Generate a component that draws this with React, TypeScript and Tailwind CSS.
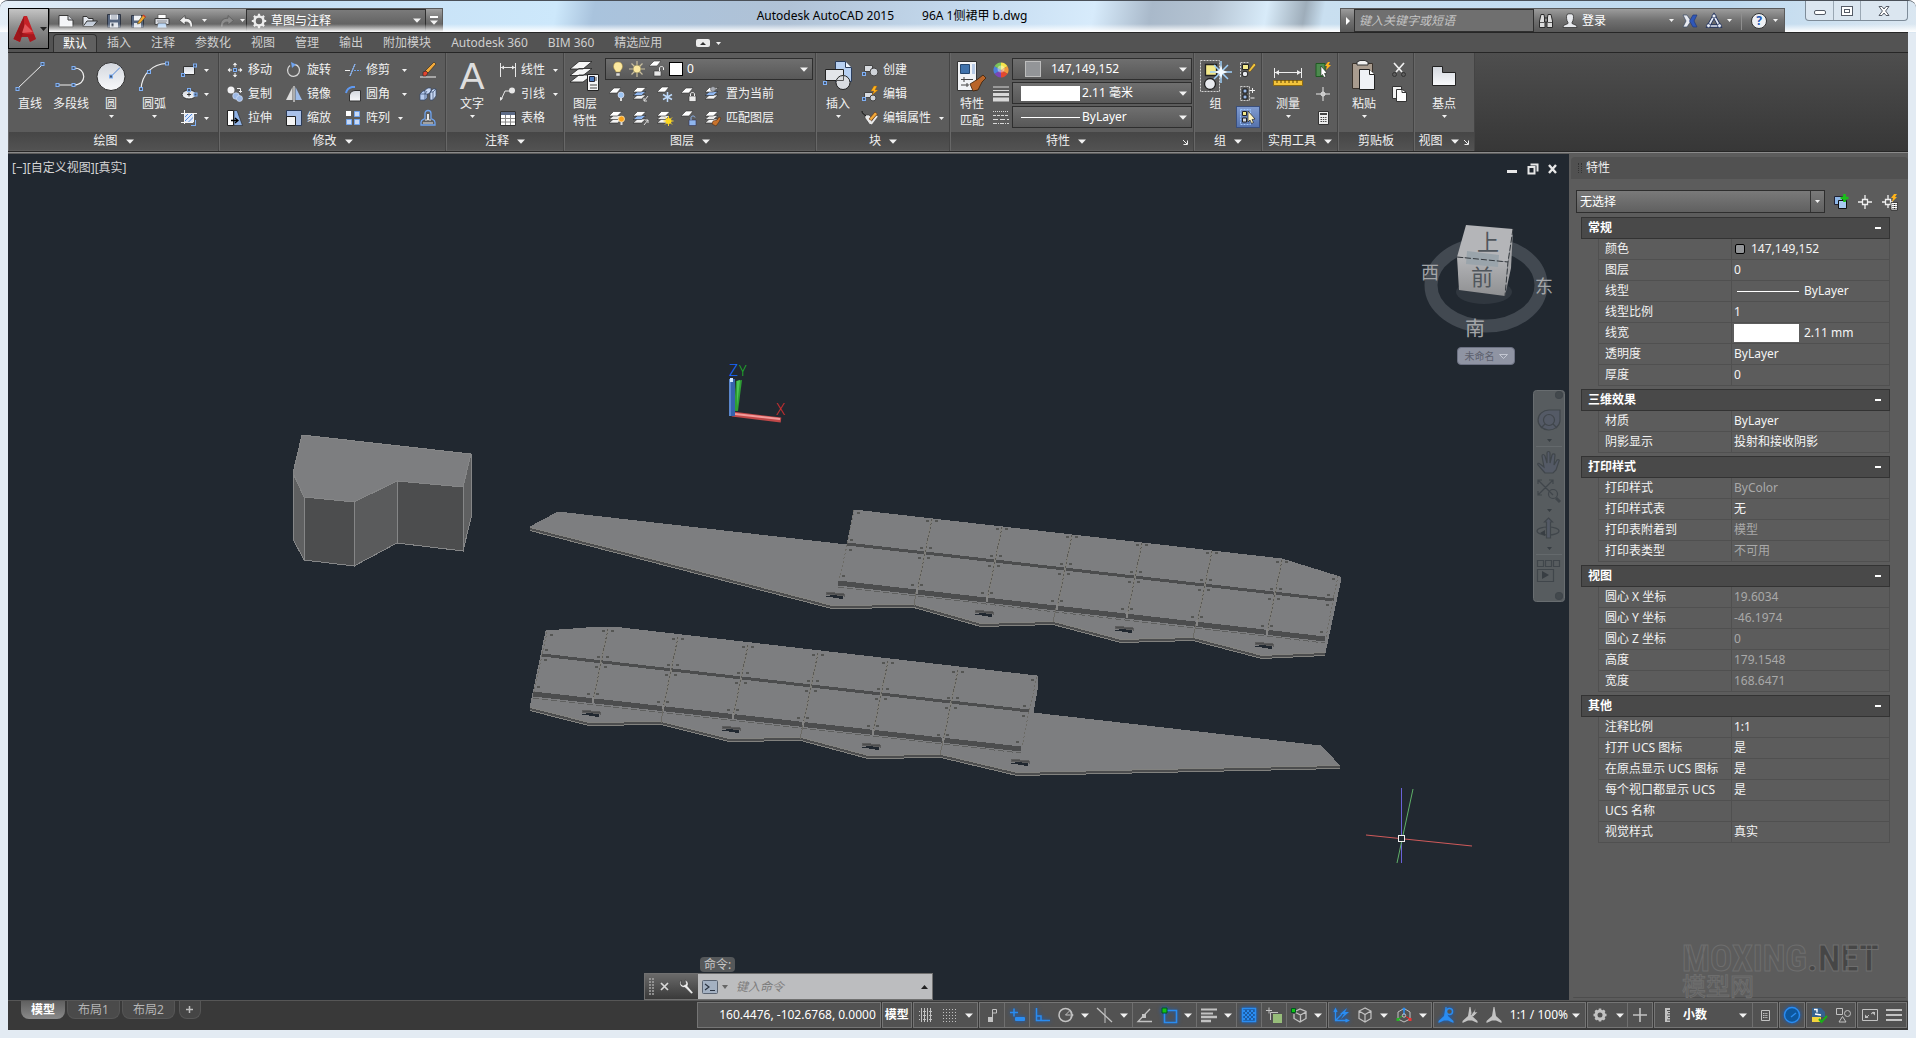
import type { ReactNode } from 'react'
import clsx from 'clsx'

/* ---------- small shared pieces ---------- */

type IconProps = { size?: number; className?: string; children: ReactNode }

function Icon({ size = 16, className, children }: IconProps) {
  return (
    <svg width={size} height={size} viewBox={`0 0 ${size} ${size}`} fill="none" className={clsx('shrink-0 overflow-visible', className)} aria-hidden="true">
      {children}
    </svg>
  )
}

function Caret({ big = false, className }: { big?: boolean; className?: string }) {
  return big ? (
    <svg width="8" height="5" viewBox="0 0 8 5" className={clsx('shrink-0', className)} aria-hidden="true">
      <path d="M0 0.5h8L4 4.8z" fill="#f2f2f2" />
    </svg>
  ) : (
    <svg width="5" height="3" viewBox="0 0 5 3" className={clsx('shrink-0', className)} aria-hidden="true">
      <path d="M0 0h5L2.5 3z" fill="#f2f2f2" />
    </svg>
  )
}

function Node({ x, y }: { x: number; y: number }) {
  return <rect x={x - 1.5} y={y - 1.5} width="3" height="3" fill="#46566e" stroke="#7fb0f5" />
}

function Sheets({ mid = '#e9e9e9' }: { mid?: string }) {
  return (
    <g stroke="#2c2c2c" strokeWidth=".6">
      <path d="M0 13 4.500 9h8.500l-4.500 4z" fill="#f4f4f4" />
      <path d="M0 9.500 4.500 5.500h8.500l-4.500 4z" fill={mid} />
      <path d="M0 6 4.500 1.500h8.500l-4.500 4.500z" fill="#fff" />
    </g>
  )
}

/* ---------- title bar ---------- */

function QuickAccess() {
  return (
    <div className="ml-[49px] mt-[7px] flex h-6 items-center border border-b-0 border-[#5a5a5a] bg-linear-to-b from-[#a0a0a0] via-[#6f6f6f] to-[#555555]">
      <div className="flex items-center gap-2 pl-2">
        <button aria-label="新建">
          <Icon>
            <path d="M1 2.500h9l5 4.500v7H1z" fill="#f4f5f8" stroke="#3a3a3a" />
            <path d="M10 2.500V7h5" fill="#c9ccd3" stroke="#3a3a3a" />
          </Icon>
        </button>
        <button aria-label="打开">
          <Icon>
            <path d="M1 13.500v-10h4l1.500 2H11v3" fill="#e4e8ef" stroke="#333" />
            <path d="M1 13.500 5 8h10.500L11 13.500z" fill="#c3ccd9" stroke="#333" />
          </Icon>
        </button>
        <button aria-label="保存">
          <Icon>
            <path d="M1.500 1.500h13v13h-13z" fill="#56657e" stroke="#2e3542" />
            <path d="M4 1.500h8v5H4z" fill="#f0f2f5" />
            <path d="M4 9.500h8v5H4z" fill="#dfe3ea" />
            <path d="M5.500 10.500h2v3h-2z" fill="#333d4d" />
            <path d="M5 3h6M5 5h6" stroke="#9099a8" />
          </Icon>
        </button>
        <button aria-label="另存为">
          <Icon>
            <path d="M1.500 2.500h12v12h-12z" fill="#56657e" stroke="#2e3542" />
            <path d="M4 2.500h7v5H4z" fill="#f0f2f5" />
            <path d="M4 10h7v4.500H4z" fill="#dfe3ea" />
            <path d="m8 9 5-7 2.500 2-5 6-3 1z" fill="#f0a32c" stroke="#553" strokeWidth=".7" />
            <path d="m13 2 2.500 2" stroke="#d23b2b" strokeWidth="1.500" />
          </Icon>
        </button>
        <button aria-label="打印">
          <Icon>
            <path d="M4 1.500h8v4H4z" fill="#fff" stroke="#555" strokeWidth=".7" />
            <path d="M1 5.500h14v6H1z" fill="#d9dce2" stroke="#3d3d3d" />
            <path d="M4 10h8l1 5H3z" fill="#b8d5f5" stroke="#555" strokeWidth=".7" />
            <path d="M3 8h10" stroke="#8a8f98" />
          </Icon>
        </button>
        <button aria-label="放弃">
          <Icon>
            <path d="M7 2.500 1.500 7.500 7 12V9.200c3.500-.4 5 1 5 4.800h2.500c.3-6-2-8.800-7.500-8.800z" fill="#f0f0f0" stroke="#444" strokeWidth=".8" />
          </Icon>
        </button>
      </div>
      <Caret className="ml-2" />
      <button aria-label="重做" className="ml-3">
        <Icon>
          <path d="M9 2.500 14.500 7.500 9 12V9.200c-3.500-.4-5 1-5 4.800H1.500C1.200 8 3.500 5.200 9 5.200z" fill="#8b8b8b" stroke="#5c5c5c" strokeWidth=".8" />
        </Icon>
      </button>
      <Caret className="ml-[5px]" />
      <label className="ml-px flex h-full w-[180px] items-center border border-[#2f2f2f] bg-linear-to-b from-[#7a7a7a] to-[#585858] pl-1 pr-1">
        <Icon>
          <circle cx="8" cy="8" r="4.500" stroke="#ececec" strokeWidth="2.600" />
          <g stroke="#ececec" strokeWidth="2.200">
            <path d="M8 .8v2.400M8 12.800v2.400M.8 8h2.400M12.800 8h2.400M2.900 2.900l1.700 1.700M11.400 11.400l1.700 1.700M13.100 2.900l-1.700 1.700M4.600 11.400l-1.700 1.700" />
          </g>
        </Icon>
        <select aria-label="工作空间" className="ml-1 flex-1 appearance-none bg-transparent text-xs text-white">
          <option>草图与注释</option>
        </select>
        <Caret big />
      </label>
      <button aria-label="自定义快速访问工具栏" className="flex h-full w-4 flex-col items-center justify-center gap-[2px]">
        <span className="h-[2px] w-2 bg-white" />
        <Caret big />
      </button>
    </div>
  )
}

function InfoCenter() {
  return (
    <div className="mr-5 mt-[7px] flex h-6 w-[445px] items-center border border-b-0 border-[#5a5a5a] bg-linear-to-b from-[#9c9c9c] via-[#707070] to-[#585858]">
      <button aria-label="收起" className="flex w-[13px] justify-center">
        <svg width="4" height="8" viewBox="0 0 4 8" aria-hidden="true"><path d="M0 0l4 4-4 4z" fill="#fff" /></svg>
      </button>
      <input
        aria-label="搜索"
        placeholder="键入关键字或短语"
        className="h-full w-[180px] border border-[#2f2f2f] bg-[#6f6f6f] px-1 text-xs italic text-white placeholder:text-[#c4c4c4]"
      />
      <button aria-label="搜索" className="ml-1">
        <Icon>
          <path d="M3 1.500h3l1 6v7H1.500V8zM10 1.500h3L14.500 8v6.500H9v-7z" fill="#dcdcdc" stroke="#2c2c2c" />
          <path d="M6.500 5h3v4h-3z" fill="#8a8a8a" stroke="#2c2c2c" />
          <path d="M2 9.500h4.500M9.500 9.500H14" stroke="#555" />
        </Icon>
      </button>
      <button className="ml-2 flex items-center gap-1 text-xs text-white">
        <Icon>
          <path d="M5 1.500c1-1 5-1 6 0 1 2 .5 6-1 8v1l4.500 2 .5 2H1l.5-2 4.500-2v-1c-1.500-2-2-6-1-8z" fill="#e8eaee" stroke="#333" strokeWidth=".8" />
        </Icon>
        登录
      </button>
      <Caret className="ml-auto" />
      <button aria-label="Exchange" className="ml-2">
        <Icon>
          <path d="M1 2h4l4 6-4 6H1l3-6z" fill="#e8eaf0" stroke="#3b4a66" strokeWidth=".7" />
          <path d="M15 2h-4L7.500 8l3.500 6h4l-3-6z" fill="#2f57b8" stroke="#233a78" strokeWidth=".7" />
        </Icon>
      </button>
      <button aria-label="A360" className="ml-2">
        <Icon>
          <path d="M8 3 2.500 13h11z" stroke="#22325c" strokeWidth="3.500" />
          <path d="M8 3 2.500 13h11z" stroke="#e6ebf5" strokeWidth="1.700" />
          <circle cx="8" cy="3" r="2" fill="#e6ebf5" stroke="#22325c" strokeWidth=".8" />
          <circle cx="2.500" cy="12.700" r="2" fill="#e6ebf5" stroke="#22325c" strokeWidth=".8" />
          <circle cx="13.500" cy="12.700" r="2" fill="#e6ebf5" stroke="#22325c" strokeWidth=".8" />
        </Icon>
      </button>
      <Caret className="ml-[5px]" />
      <span className="mx-[9px] h-[18px] w-px bg-[#8e8e8e]" />
      <button aria-label="帮助" className="flex size-4 items-center justify-center rounded-full border border-[#333] bg-[#eef0f4] text-xs font-bold text-[#2158b5]">
        ?
      </button>
      <Caret className="mx-[6px]" />
    </div>
  )
}

function TitleBar() {
  return (
    <header className="relative flex h-[31px] shrink-0 items-start">
      <div className="absolute inset-x-0 bottom-0 h-2 bg-linear-to-b from-transparent to-white" />
      <QuickAccess />
      <h1 className="absolute left-1/2 top-[7px] flex -translate-x-1/2 gap-7 whitespace-pre pr-33 text-xs leading-4 text-black">
        <span>Autodesk AutoCAD 2015</span>
        <span>96A 1侧裙甲 b.dwg</span>
      </h1>
      <div className="relative ml-auto flex">
        <InfoCenter />
        <div className="mr-2 flex h-5 overflow-hidden rounded-b border border-t-0 border-[#7e8c99] bg-[#dbe6f0]">
          <button aria-label="最小化" className="flex w-7 items-center justify-center border-r border-[#9aa7b3]">
            <span className="mt-1 h-[5px] w-3 rounded-xs border border-[#555b66] bg-white" />
          </button>
          <button aria-label="还原" className="flex w-[27px] items-center justify-center border-r border-[#9aa7b3]">
            <span className="flex h-[10px] w-3 items-center justify-center border border-[#555b66] bg-white">
              <span className="h-1 w-[6px] border border-[#555b66]" />
            </span>
          </button>
          <button aria-label="关闭" className="flex w-[46px] items-center justify-center">
            <svg width="12" height="10" viewBox="0 0 12 10" aria-hidden="true">
              <path d="M1 .5h3l2 2.500 2-2.500h3L7.600 5 11 9.500H8L6 7 4 9.500H1L4.400 5z" fill="#fff" stroke="#555b66" />
            </svg>
          </button>
        </div>
      </div>
    </header>
  )
}

/* ---------- ribbon ---------- */

const TABS = ['默认', '插入', '注释', '参数化', '视图', '管理', '输出', '附加模块', 'Autodesk 360', 'BIM 360', '精选应用']

function TabRow() {
  return (
    <nav className="flex h-[21px] shrink-0 items-end border-y border-[#262626] bg-[#535353] pl-[45px]">
      {TABS.map((tab, i) => (
        <button
          key={tab}
          className={clsx(
            'h-[18px] text-xs leading-[18px]',
            i === 0 ? 'rounded-t-sm border border-b-0 border-[#303030] bg-[#606060] px-[9px]' : 'px-[10px] text-[#cfcfcf]',
            i === 0 && 'text-white',
          )}
        >
          {tab}
        </button>
      ))}
      <button aria-label="最小化功能区" className="ml-6 flex h-[18px] items-center gap-[6px]">
        <span className="flex h-2 w-[14px] items-center justify-center rounded-xs bg-[#ececec]">
          <svg width="6" height="3" viewBox="0 0 6 3" aria-hidden="true"><path d="M0 3h6L3 0z" fill="#333" /></svg>
        </span>
        <Caret />
      </button>
    </nav>
  )
}

type PanelProps = { title: string; width: string; arrow?: boolean; launcher?: boolean; children: ReactNode }

function Panel({ title, width, arrow = true, launcher, children }: PanelProps) {
  return (
    <section className={clsx('flex h-full shrink-0 flex-col border-r border-[#444444] border-l border-l-[#676767] bg-[#5c5c5c]', width)}>
      <div className="flex flex-1 items-start pt-[5px]">{children}</div>
      <div className={clsx('relative mb-px flex h-[18px] items-center justify-center gap-2 bg-linear-to-b from-[#464646] to-[#525252] text-xs text-[#f0f0f0]', launcher && 'pr-3')}>
        {title}
        {arrow && <Caret big />}
        {launcher && (
          <svg width="7" height="7" viewBox="0 0 7 7" className="absolute right-1 top-[7px]" aria-hidden="true">
            <path d="M1 1l4 4M5.500 1.500v4h-4" stroke="#eee" fill="none" />
          </svg>
        )}
      </div>
    </section>
  )
}

type BigProps = { label: string; second?: string; arrow?: boolean; width?: string; children: ReactNode }

function Big({ label, second, arrow, width = 'w-10', children }: BigProps) {
  return (
    <button className={clsx('flex shrink-0 flex-col items-center text-xs leading-[17px] text-[#f2f2f2]', width)}>
      <Icon size={32} className="mt-[2px]">{children}</Icon>
      <span className="mt-[3px] whitespace-nowrap">{label}</span>
      {second && <span>{second}</span>}
      {arrow && <Caret className="mt-[3px]" />}
    </button>
  )
}

function Small({ label, arrow, gap, name, active, children }: { label?: string; arrow?: boolean; gap?: string; name?: string; active?: boolean; children: ReactNode }) {
  return (
    <button
      aria-label={label ? undefined : name}
      className={clsx(
        'flex items-center text-xs whitespace-nowrap text-[#f2f2f2]',
        active ? 'h-[22px] w-6 justify-center border border-[#3a4f7c] bg-linear-to-b from-[#7f9bd0] to-[#5673ad]' : 'h-6',
      )}
    >
      <Icon>{children}</Icon>
      {label && <span className="ml-[5px]">{label}</span>}
      {arrow && <Caret className={gap ?? 'ml-[10px]'} />}
    </button>
  )
}

function Column({ className, children }: { className?: string; children: ReactNode }) {
  return <div className={clsx('flex shrink-0 flex-col', className)}>{children}</div>
}

function DrawPanel() {
  return (
    <Panel title="绘图" width="w-[211px]">
      <Big label="直线" width="w-[42px]">
        <path d="M3 29 29 4" stroke="#f0f0f0" />
        <Node x={3.500} y={29} /><Node x={28.500} y={4} />
      </Big>
      <Big label="多段线" width="w-10">
        <path d="M2 25h17c13 0 13-17 0-17" stroke="#f0f0f0" strokeWidth="1.200" />
        <Node x={2.500} y={25} /><Node x={18.500} y={25} /><Node x={18.500} y={8} />
      </Big>
      <Big label="圆" arrow>
        <circle cx="16" cy="16.500" r="14" fill="url(#disc)" stroke="#2f2f2f" />
        <path d="m16 16.500 9-9" stroke="#4f86d8" />
        <Node x={16} y={16.500} />
      </Big>
      <Big label="圆弧" arrow width="w-[46px]">
        <path d="M3 29C4 14 14 4 29 3.500" stroke="#f0f0f0" strokeWidth="1.200" />
        <Node x={3} y={29} /><Node x={11} y={12} /><Node x={29} y={3.500} />
      </Big>
      <Column className="ml-1">
        <Small name="矩形" arrow gap="ml-[7px]">
          <path d="M2.500 4.500h11v8h-11z" fill="url(#disc)" stroke="#333" /><Node x={14} y={3.500} /><Node x={2} y={13} />
        </Small>
        <Small name="椭圆" arrow gap="ml-[7px]">
          <ellipse cx="8" cy="8.500" rx="7" ry="4.500" fill="url(#disc)" stroke="#333" />
          <path d="M6 8.500h4M8 6.500v4" stroke="#333" /><Node x={8} y={4} /><Node x={14.500} y={8.500} />
        </Small>
        <Small name="图案填充" arrow gap="ml-[7px]">
          <path d="M3.500 3.500h9v9h-9z" fill="#dfe8f8" />
          <path d="M3 8l5-5M3 12l9-9M7 12.500l6-6M11 13l2-2" stroke="#4f86d8" />
          <path d="M3.500 0v14M12.500 3v9M0 3.500h16M0 12.500h12" stroke="#f4f4f4" />
          <path d="M10 15.500h5M14.500 10v5" stroke="#7fb0f5" />
        </Small>
      </Column>
    </Panel>
  )
}

function ModifyPanel() {
  return (
    <Panel title="修改" width="w-[227px]">
      <Column className="ml-[7px] w-[59px]">
        <Small label="移动">
          <path d="M8 0l3 3.500H5zM8 16l3-3.500H5zM0 8l3.500-3v6zM16 8l-3.500-3v6z" fill="#f0f0f0" stroke="#333" strokeWidth=".5" />
          <path d="M8 3v2M8 11v2M3 8h2M11 8h2" stroke="#f0f0f0" /><Node x={8} y={8} />
        </Small>
        <Small label="复制">
          <circle cx="4" cy="4" r="3.500" fill="#f2f2f4" /><circle cx="9" cy="10" r="3.300" fill="#9db9e6" stroke="#dce6f7" strokeWidth=".6" />
          <circle cx="12.500" cy="12.500" r="3" fill="#9db9e6" stroke="#dce6f7" strokeWidth=".6" />
          <path d="M10 2.500h3.500V6M12 5l1.500 1.500L15 5" stroke="#f0f0f0" />
        </Small>
        <Small label="拉伸">
          <path d="M.5.500h6v15h-6z" fill="#fff" stroke="#222" /><path d="M7 .5h3l5.500 15H7z" fill="#8fb2e6" stroke="#222" strokeWidth=".6" />
          <path d="M4 10.500h6M8 8l3 2.500L8 13" stroke="#000" strokeWidth="1.300" />
        </Small>
      </Column>
      <Column className="w-[59px]">
        <Small label="旋转">
          <path d="M9 2.500a6 6 0 1 1-5 1" stroke="#d5d5d5" strokeWidth="1.300" /><path d="m5 0 5 2.500L6 6z" fill="#6fa4f0" />
        </Small>
        <Small label="镜像">
          <path d="M6.500 1v13H0z" fill="#dcdcdc" /><path d="M9.500 1v13H16z" fill="#9dbbe8" /><path d="M8 0v16" stroke="#fff" />
        </Small>
        <Small label="缩放">
          <path d="M.5.500h15v15H.5z" fill="#a9c0e8" stroke="#2b3a55" /><path d="M.5 6.500h9v9h-9z" fill="#f4f4f4" stroke="#222" />
        </Small>
      </Column>
      <Column className="w-[75px]">
        <Small label="修剪" arrow gap="ml-3">
          <path d="M0 8.500h5M5 14l5-12" stroke="#f0f0f0" /><path d="M5 14l5-12" stroke="#6fa4f0" /><path d="M9 8.500h7" stroke="#6fa4f0" strokeDasharray="2 1" />
        </Small>
        <Small label="圆角" arrow gap="ml-3">
          <path d="M4.500 15V9A6 6 0 0 1 10 4.500h5.500V15z" fill="url(#disc)" stroke="#333" />
          <path d="M1 7a8 8 0 0 1 6-6h3" stroke="#5f98ef" strokeWidth="2" />
        </Small>
        <Small label="阵列" arrow gap="ml-2">
          <path d="M1 1h5v5H1z" fill="#fff" /><g fill="#c9daf5" stroke="#6fa4f0"><path d="M9.500 1.500h5v5h-5zM1.500 9.500h5v5h-5zM9.500 9.500h5v5h-5z" /></g>
        </Small>
      </Column>
      <Column>
        <Small name="删除">
          <path d="M0 15h16" stroke="#f0f0f0" /><path d="m5 9 9-9 2 2-8 9z" fill="#f2a93a" stroke="#222" strokeWidth=".6" /><path d="M3 10l3-1 2 2-2 3H3z" fill="#e3452f" stroke="#222" strokeWidth=".6" />
        </Small>
        <Small name="分解">
          <path d="M0 8l3-3h4v7l-2 2H0z" fill="#b6cbee" stroke="#33486b" strokeWidth=".7" />
          <path d="M5 4l3-2h3v4l-3 2H5zM10 6l3-3h3v7l-3 4h-3z" fill="#c8d8f3" stroke="#33486b" strokeWidth=".7" />
          <path d="M0 8h5v6M5 8l2-3M10 6h3v8M13 6l3-3" stroke="#33486b" strokeWidth=".7" />
        </Small>
        <Small name="偏移">
          <path d="M1 12.500C1 9 4 10 5 8.500V3.500c0-4 6-4 6 0v5c1 1.500 4 .5 4 4v2.500H1z" stroke="#6fa4f0" strokeWidth="1.300" />
          <path d="M3 13h10M7.500 4v6H5M8.500 4v6H11" stroke="#e8e8e8" />
        </Small>
      </Column>
    </Panel>
  )
}

function AnnotatePanel() {
  return (
    <Panel title="注释" width="w-[118px]">
      <Big label="文字" arrow width="w-[50px]">
        <text x="16" y="29" textAnchor="middle" fontSize="37" fill="#dedede" className="[font-family:'Liberation_Sans',sans-serif]">A</text>
      </Big>
      <Column className="ml-[3px]">
        <Small label="线性" arrow gap="ml-2">
          <path d="M.5 1v14M15.500 1v14M1 5.500h14" stroke="#e8e8e8" /><path d="M1 5.500 4 3.500v4zM15 5.500l-3-2v4z" fill="#e8e8e8" />
        </Small>
        <Small label="引线" arrow gap="ml-2">
          <path d="M1 14 5 5h5" stroke="#e8e8e8" /><circle cx="12" cy="4.500" r="3" fill="#e8e8e8" /><path d="M0 15v-4l3 1z" fill="#e8e8e8" />
        </Small>
        <Small label="表格">
          <path d="M.5 1.500h15v14H.5z" fill="#fff" stroke="#333" /><path d="M1 2h14v3H1z" fill="#5d6b86" />
          <path d="M1 8.500h14M1 12h14M5.500 5v10M10.500 5v10" stroke="#888" />
        </Small>
      </Column>
    </Panel>
  )
}

function LayerPanel() {
  return (
    <Panel title="图层" width="w-[252px]">
      <Big label="图层" second="特性" width="w-10">
        <g stroke="#222" strokeWidth=".8" fill="#f6f6f6">
          <path d="M1 22 10 15h13l-9 7zM1 15.500 10 8.500h13l-9 7zM1 9 10 1.500h13L14 9z" />
        </g>
        <path d="M18.500 14.500h11v16h-11z" fill="#f4f4f4" stroke="#222" />
        <path d="M20.500 16.500h5v5h-5z" fill="#4f7fc4" stroke="#223" /><path d="M27 17v4M21 25h7M21 28h7" stroke="#444" />
      </Big>
      <Column>
        <div className="mr-[2px] flex h-[22px] w-[208px] items-center border border-[#2e2e2e] bg-linear-to-b from-[#6f6f6f] to-[#585858] px-1">
          <Icon><path d="M8 1c3 0 4.500 2 4.500 4.500S10.500 9 10 11H6c-.5-2-2.500-3-2.500-5.500S5 1 8 1z" fill="#fce9a0" stroke="#a98b3c" strokeWidth=".5" /><path d="M6 12h4v3H6z" fill="#ddd" stroke="#555" strokeWidth=".5" /></Icon>
          <Icon className="ml-[3px]"><path d="M8 0v16M0 8h16M2.500 2.500l11 11M13.500 2.500l-11 11" stroke="#c9bfa0" strokeWidth="1.200" /><circle cx="8" cy="8" r="4" fill="#fce9a0" stroke="#8f8660" strokeWidth=".8" /></Icon>
          <Icon className="ml-1"><path d="M0 5l5-5h7L8 5z" fill="#fff" stroke="#333" strokeWidth=".6" /><path d="M5 10h7v5H5z" fill="#e9e9e9" stroke="#333" strokeWidth=".6" /><path d="M10.500 10V7c0-2 4-2 4 0v2" stroke="#eee" /></Icon>
          <span className="ml-1 size-[14px] border border-black bg-white" />
          <select aria-label="图层" className="ml-1 flex-1 appearance-none bg-transparent text-xs text-white">
            <option>0</option>
          </select>
          <Caret big />
        </div>
        <div className="mt-[2px] flex items-center gap-2 pl-1">
          <Small name="关"><path d="M0 7l5-5h7L8 7z" fill="#fff" stroke="#333" strokeWidth=".6" /><circle cx="12" cy="9" r="3" fill="#9cc4f2" stroke="#eef" strokeWidth=".6" /><path d="M11 12h2v3h-2z" fill="#ddd" /></Small>
          <Small name="隔离"><Sheets mid="#8fb6ee" /><path d="M15 10l-4 5M11 12v3h3" stroke="#ddd" /></Small>
          <Small name="冻结"><path d="M0 6l5-5h7L8 6z" fill="#fff" stroke="#333" strokeWidth=".6" /><path d="M10.500 6v10M6 8.500l9 5M15 8.500l-9 5" stroke="#bcd8fa" strokeWidth="1.500" /></Small>
          <Small name="锁定"><path d="M0 7l5-5h7L8 7z" fill="#fff" stroke="#333" strokeWidth=".6" /><path d="M8 10h7v5.500H8z" fill="#e9e9e9" stroke="#333" strokeWidth=".6" /><path d="M9.500 10V8c0-2 4-2 4 0v2" stroke="#eee" /></Small>
          <Small label="置为当前"><Sheets mid="#8fb6ee" /><circle cx="8" cy="3" r="2.500" fill="#a7abb3" stroke="#444" strokeWidth=".5" /></Small>
        </div>
        <div className="flex items-center gap-2 pl-1">
          <Small name="打开所有图层"><Sheets /><circle cx="12.500" cy="9" r="3" fill="#f9a21b" stroke="#fde6b4" strokeWidth=".8" /><path d="M11.500 12h2v3h-2z" fill="#ddd" /></Small>
          <Small name="取消隔离"><Sheets mid="#8fb6ee" /><path d="M11 15l4-5M12 10h3v3" stroke="#ddd" /></Small>
          <Small name="解冻所有图层"><Sheets /><path d="M11.500 6v10M6.500 11h10M8 7.500l7 7M15 7.500l-7 7" stroke="#f6d22c" /><circle cx="11.500" cy="11" r="3" fill="#ffd91e" /></Small>
          <Small name="解锁"><path d="M0 6l5-5h7L8 6z" fill="#fff" stroke="#333" strokeWidth=".6" /><path d="M8 10h7v5.500H8z" fill="#8fb6ee" stroke="#335" strokeWidth=".6" /><path d="M10 10V7.500c0-2 4-2 4 0" stroke="#8fb6ee" /></Small>
          <Small label="匹配图层"><Sheets /><path d="M8 11l4-1 2-3 2 1-2 4-3 4-4-2z" fill="#c8732c" stroke="#40230c" strokeWidth=".5" /></Small>
        </div>
      </Column>
    </Panel>
  )
}

function BlockPanel() {
  return (
    <Panel title="块" width="w-[134px]">
      <Big label="插入" arrow width="w-[42px]">
        <path d="M13.500 1.500h10l6 6v14h-16z" fill="#b7d0f2" stroke="#2c3e5c" /><path d="M23.500 1.500v6h6" fill="#eef4fc" stroke="#2c3e5c" />
        <path d="M3.500 9.500h18v11h-18z" fill="#e3e5e9" stroke="#222" /><circle cx="21" cy="22.500" r="7" fill="#d9dce1" stroke="#222" />
        <path d="M14 20.500h7.500V15.500" stroke="#555" /><Node x={3} y={23} />
      </Big>
      <Column className="ml-[3px]">
        <Small label="创建"><path d="M2.500 3.500h8v6h-8z" fill="#d8dbe0" stroke="#444" /><circle cx="12" cy="10" r="4" fill="#cfd3d9" stroke="#444" /><Node x={2} y={12} /></Small>
        <Small label="编辑"><path d="M2.500 6.500h8v5h-8z" fill="#d8dbe0" stroke="#444" /><circle cx="11" cy="12" r="3" fill="#cfd3d9" stroke="#444" /><path d="M12 0l-3 5h3l-2 4 6-5h-3l2-4z" fill="#ffb31a" stroke="#a65b00" strokeWidth=".4" /><Node x={2} y={13} /></Small>
        <Small label="编辑属性" arrow gap="ml-2"><path d="M3 5h4l3 3v5L8 15 3 8z" fill="#e9e9e9" stroke="#333" strokeWidth=".6" /><path d="M9 14l6-8" stroke="#e9e9e9" strokeWidth="2" /><path d="m7 9 6-7 2.500 2-6 6.500z" fill="#f2a93a" stroke="#5b2b12" strokeWidth=".6" /><path d="M0 1c0 3 2 3 4 5" stroke="#111" /></Small>
      </Column>
    </Panel>
  )
}

function PropertySelect({ label, children, className }: { label: string; children: ReactNode; className?: string }) {
  return (
    <div className="flex h-6 items-start">
      <div className="flex h-[22px] w-[180px] items-center border border-[#2e2e2e] bg-linear-to-b from-[#6f6f6f] to-[#585858] pl-2 pr-1">
        {children}
        <select aria-label={label} className={clsx('flex-1 appearance-none bg-transparent text-xs text-white', className)}>
          <option>{label}</option>
        </select>
        <Caret big />
      </div>
    </div>
  )
}

function PropertiesRibbonPanel() {
  return (
    <Panel title="特性" width="w-[244px]" launcher>
      <Big label="特性" second="匹配" width="w-[42px]">
        <path d="M1.500 1.500h19v29h-19z" fill="#f1f3f6" stroke="#333" /><path d="M4.500 4.500h9v9h-9z" fill="#3f72ac" stroke="#24466e" />
        <path d="M16 4v10h3V4z" fill="#b8cbe6" /><path d="M5 19.500h12M5 25h8M8 17v5M11 23v4" stroke="#444" />
        <path d="M14 24l8-5 5-4 3 3-4 4-4 8-5 1z" fill="#b9652a" stroke="#3a2009" strokeWidth=".8" />
      </Big>
      <Column className="mr-[3px]">
        <Small name="颜色">
          <path d="M8 8 8 .5a7.500 7.500 0 0 1 6.500 3.800z" fill="#f5e34a" /><path d="M8 8l6.500-3.700a7.500 7.500 0 0 1 0 7.500z" fill="#f09a3c" />
          <path d="M8 8l6.500 3.800A7.500 7.500 0 0 1 8 15.500z" fill="#e2482f" /><path d="M8 8v7.500a7.500 7.500 0 0 1-6.500-3.700z" fill="#7a46b8" />
          <path d="M8 8l-6.500 3.800a7.500 7.500 0 0 1 0-7.500z" fill="#4c80dd" /><path d="M8 8 1.500 4.300A7.500 7.500 0 0 1 8 .5z" fill="#7cc35a" /><circle cx="8" cy="7" r="3.500" fill="#fff" fillOpacity=".4" />
        </Small>
        <Small name="线宽"><path d="M0 1h16M0 4.500h16" stroke="#d8d8d8" /><path d="M0 8.500h16" stroke="#d8d8d8" strokeWidth="3" /><path d="M0 13.500h16" stroke="#d8d8d8" strokeWidth="4" /></Small>
        <Small name="线型"><path d="M0 1.500h16" stroke="#d8d8d8" strokeDasharray="1 1" /><path d="M0 5.500h16" stroke="#d8d8d8" strokeDasharray="3 1" /><path d="M0 9.500h16" stroke="#d8d8d8" strokeDasharray="5 2" /><path d="M0 13.500h16" stroke="#d8d8d8" strokeDasharray="4 1 1 1" /></Small>
      </Column>
      <Column>
        <PropertySelect label="147,149,152" className="ml-[10px]">
          <span className="ml-1 size-4 border border-[#bdbdbd] bg-[#939598]" />
        </PropertySelect>
        <PropertySelect label="2.11 毫米" className="ml-[2px]">
          <span className="h-[15px] w-[59px] bg-white" />
        </PropertySelect>
        <PropertySelect label="ByLayer" className="ml-[2px]">
          <span className="h-px w-[59px] bg-white" />
        </PropertySelect>
      </Column>
    </Panel>
  )
}

function RibbonTail() {
  return (
    <>
      <Panel title="组" width="w-[68px]">
        <Big label="组" width="w-[41px]">
          <path d="M.5.500h19v31H.5z" stroke="#d0d0d0" strokeDasharray="2 1" /><path d="M5.500 4.500h11v11h-11z" fill="#f3e98b" stroke="#222" strokeWidth="1.300" />
          <circle cx="10" cy="24" r="5.500" fill="#e8eaee" stroke="#222" strokeWidth="1.300" />
          <path d="M21 1v22M10 12h22M14 5l14 14M28 5 14 19" stroke="#9fd0fa" strokeWidth="1.500" /><path d="M21 5l1.500 5 5 2-5 2-1.500 5-1.500-5-5-2 5-2z" fill="#f4fbff" />
        </Big>
        <Column>
          <Column className="pl-1">
            <Small name="解除编组"><path d="M.5.500h9M.5 1v14" stroke="#ccc" strokeDasharray="2 1" /><path d="M2.500 2.500h6v5h-6z" fill="#f3e98b" stroke="#222" /><circle cx="5" cy="12" r="2.800" fill="#e8eaee" stroke="#222" /><path d="m8 9 6-8 2 2-6 7z" fill="#f2c43a" stroke="#432" strokeWidth=".5" /></Small>
            <Small name="组编辑"><path d="M.5.500h9v14h-9z" stroke="#ccc" strokeDasharray="2 1" /><path d="M3 3h4v4H3zM3 9h4v4H3z" fill="#9db9e6" stroke="#111" /><path d="M10 4.500h5M12.500 2v5M10.500 12h4" stroke="#eee" /></Small>
          </Column>
          <Small name="启用组选择" active><path d="M.5.500h10v15H.5z" stroke="#9cc6ff" strokeDasharray="2 1" /><path d="M2.500 2.500h4v4h-4z" fill="#f3e98b" stroke="#222" /><path d="M2.500 9h4v4h-4z" fill="#d5dae3" stroke="#222" /><path d="M8 2l7 8-3 .5 1.500 3-2 1L10 11l-2 2z" fill="#fdf4c2" stroke="#222" strokeWidth=".7" /></Small>
        </Column>
      </Panel>
      <Panel title="实用工具" width="w-[76px]">
        <Big label="测量" arrow width="w-[50px]">
          <path d="M2.500 8v10M29.500 8v10M3 12.500h26" stroke="#eee" /><path d="M3 12.500 7 10v5zM29 12.500 25 10v5z" fill="#eee" />
          <path d="M1.500 20.500h29v5h-29z" fill="#f3c33a" stroke="#8d6a12" /><path d="M5 20v3M9 20v3M13 20v3M17 20v3M21 20v3M25 20v3" stroke="#5d4408" />
        </Big>
        <Column className="ml-[2px]">
          <Small name="快速选择"><path d="M1 1.500h9v13H1z" fill="#4c8a4e" stroke="#1f5a22" /><path d="M6 4l6 7-2.500.5 1.500 3-2 1-1.500-3L6 14z" fill="#fff" stroke="#222" strokeWidth=".6" /><path d="M13 0l-3 4h2l-1 4 5-5h-2.500l1.500-3z" fill="#ffb31a" /></Small>
          <Small name="点坐标"><path d="M8 1v14M1 8h14" stroke="#e8e8e8" /><circle cx="8" cy="8" r="2" stroke="#e8e8e8" /></Small>
          <Small name="快速计算器"><path d="M3.500 1.500h10v13h-10z" fill="#eee" stroke="#333" /><path d="M5 3h7v2H5z" fill="#444" /><path d="M5.500 7.500h6M5.500 9.500h6M5.500 11.500h6" stroke="#444" strokeDasharray="1.500 .8" /></Small>
        </Column>
      </Panel>
      <Panel title="剪贴板" width="w-[76px]" arrow={false}>
        <Big label="粘贴" arrow width="w-[50px]">
          <path d="M4.500 3.500h20v25h-20z" fill="#a99c8f" stroke="#3a332c" /><path d="M9 5V2l3-1.500h5L20 2v3z" fill="#f0f0f0" stroke="#333" />
          <path d="M11.500 9.500h10l5 5v15h-15z" fill="#f0f2f6" stroke="#222" /><path d="M21.500 9.500v5h5" fill="#fff" stroke="#222" />
        </Big>
        <Column className="ml-[2px]">
          <Small name="剪切"><path d="M3 1l8 9M13 1 5 10" stroke="#f0f0f0" strokeWidth="1.700" /><circle cx="3.500" cy="12.500" r="2" stroke="#333" /><circle cx="12.500" cy="12.500" r="2" stroke="#333" /></Small>
          <Small name="复制剪裁"><path d="M1.500.500h9v12h-9z" fill="#f2f2f2" stroke="#333" /><path d="M5.500 3.500h6l4 3v9h-10z" fill="#fff" stroke="#333" /><path d="M11 3.500v3h4" stroke="#333" /></Small>
        </Column>
      </Panel>
      <Panel title="视图" width="w-[61px]" launcher>
        <Big label="基点" arrow width="w-[58px]">
          <path d="M4.500 6.500h10v6h13v13h-23z" fill="url(#disc)" stroke="#222" />
        </Big>
      </Panel>
    </>
  )
}

function Ribbon() {
  return (
    <div className="flex h-[98px] shrink-0 bg-linear-to-b from-[#4e4e4e] to-[#373737]">
      <DrawPanel />
      <ModifyPanel />
      <AnnotatePanel />
      <LayerPanel />
      <BlockPanel />
      <PropertiesRibbonPanel />
      <RibbonTail />
    </div>
  )
}

/* ---------- model space ---------- */

const FACE = '#7d7e80'
const DARK = '#4c4d4e'
const SEAM = '#6c6b66'

type Skirt = {
  outline: string
  edge: string
  top: [number, number]
  mid: [number, number]
  low: [number, number]
  thin: [number, number, number, number]
  thick: [number, number, number, number]
  ends: [number, number][][]
  tails: string
  slots: [number, number][]
}

const UPPER: Skirt = {
  outline: '530,527 558,512 847,545 854,510 1282,559 1340,577 1340,583 1325,653 1262,656 1193,638 1121,640 1053,622 981,624 914,606 832,607 530,528',
  edge: '530,529 832,607 914,606 981,625 1053,623 1121,641 1193,639 1262,657 1325,654',
  top: [932, 519],
  mid: [925, 553],
  low: [917, 592],
  thin: [847, 544, 1334, 600],
  thick: [838, 583, 1325, 639],
  ends: [[[854, 510], [847, 545], [839, 581]], [[1338, 576], [1333, 600], [1326, 637]]],
  tails: 'M916 592l-2 14M1056 608l-3 14M1196 624l-3 14',
  slots: [[835, 595], [984, 613], [1124, 629], [1264, 645]],
}

const LOWER: Skirt = {
  outline: '546,631 600,627 613,627 1037,676 1038,684 1033,713 1321,746 1340,766 1017,773 941,755 868,756 801,738 729,739 661,722 589,723 530,708',
  edge: '530,709 589,724 661,723 729,740 801,739 868,757 941,756 1017,774 1340,767',
  top: [608, 629],
  mid: [602, 662],
  low: [593, 701],
  thin: [542, 655, 1029, 711],
  thick: [533, 694, 1021, 749],
  ends: [[[547, 632], [542, 655], [534, 692]], [[1037, 677], [1029, 711], [1022, 747]]],
  tails: 'M663 709l-2 14M803 725l-3 14M943 741l-3 14',
  slots: [[591, 713], [731, 729], [871, 746], [1020, 762]],
}

function rivets(s: Skirt) {
  const dots: [number, number][] = []
  for (let i = 0; i < 6; i++) {
    const dx = i * 70
    const dy = Math.round(i * 8.1)
    for (const side of [-5, 4]) {
      dots.push([s.top[0] + dx + side, s.top[1] + dy + 2])
      dots.push([s.mid[0] + dx + side + 1, s.mid[1] + dy - 5])
      dots.push([s.mid[0] + dx + side - 1, s.mid[1] + dy + 5])
      dots.push([s.low[0] + dx + side, s.low[1] + dy - 7])
    }
  }
  s.ends.forEach((end, side) => {
    const shift = side ? -5 : 4
    dots.push([end[0][0] + shift, end[0][1] + 3], [end[1][0] + shift, end[1][1] - 5])
    dots.push([end[1][0] + shift - 1, end[1][1] + 5], [end[2][0] + shift, end[2][1] - 5])
  })
  return dots
}

function SkirtPlate({ skirt }: { skirt: Skirt }) {
  const [tx1, ty1, tx2, ty2] = skirt.thin
  const [kx1, ky1, kx2, ky2] = skirt.thick
  return (
    <g>
      <polygon points={skirt.outline} fill={FACE} stroke={FACE} />
      <polyline points={skirt.edge} fill="none" stroke="#82827f" strokeWidth="4" />
      <polyline points={skirt.edge} fill="none" stroke={DARK} strokeWidth="2" />
      <line x1={tx1} y1={ty1} x2={tx2} y2={ty2} stroke={DARK} strokeWidth="3" />
      <line x1={kx1} y1={ky1} x2={kx2} y2={ky2} stroke={DARK} strokeWidth="5" />
      <line x1={kx1} y1={ky1 + 4} x2={kx2} y2={ky2 + 4} stroke="#5f605f" strokeDasharray="6 3" />
      {[0, 1, 2, 3, 4, 5].map((i) => (
        <g key={i} transform={`translate(${i * 70} ${Math.round(i * 8.1)})`}>
          <path d={`M${skirt.top[0]} ${skirt.top[1]}L${skirt.low[0]} ${skirt.low[1]}`} stroke="#7f7e7a" strokeWidth="2" />
          <path d={`M${skirt.top[0]} ${skirt.top[1]}L${skirt.low[0]} ${skirt.low[1]}`} stroke="#5a5a57" strokeDasharray="2 2" />
          <path d={`M${skirt.low[0]} ${skirt.low[1] - 4}v6`} stroke="#858585" strokeWidth="1.500" />
        </g>
      ))}
      <path d={skirt.tails} stroke={SEAM} />
      {skirt.ends.map((e, i) => (
        <path key={i} d={`M${e[0]}L${e[1]}L${e[2]}`} stroke={SEAM} strokeDasharray="2 2" fill="none" />
      ))}
      {rivets(skirt).map(([x, y]) => (
        <rect key={`${x},${y}`} x={x - 1} y={y - 1} width="3" height="2" fill="#555654" />
      ))}
      {skirt.slots.map(([x, y]) => (
        <g key={x}>
          <path d={`M${x - 9} ${y - 3}l18 2v2l-18-2z`} fill={DARK} stroke="#5c5c5c" />
          <path d={`M${x - 9} ${y + 1}h4v-1l13 1v3h-4v-1l-13-1z`} fill="#212830" />
        </g>
      ))}
    </g>
  )
}

function Model() {
  return (
    <svg className="absolute inset-0 size-full" aria-label="模型">
      <g transform="translate(-8 -154)" shapeRendering="crispEdges">
        <g stroke="#858687">
          <path d="M302 435 471 454 463 487 397 481 354 502 304 497 293 473z" fill={FACE} />
          <path d="M293 473 304 497v63l-11-21z" fill="#5f6061" />
          <path d="M304 497l50 5v64l-50-6zM397 481l66 6v64l-66-8z" fill={DARK} />
          <path d="M354 502l43-21v62l-43 23z" fill="#5a5b5c" />
          <path d="M463 487l8-33v64l-8 33z" fill="#5f6061" />
        </g>
        <SkirtPlate skirt={UPPER} />
        <SkirtPlate skirt={LOWER} />
      </g>

      {/* UCS tripod */}
      <g transform="translate(-8 -154)">
        <path d="M734 411l2-30 6-1-4 31z" fill="#2f9e35" />
        <path d="M737 381l3-1-3 26z" fill="#4cc453" />
        <path d="M732 414l49 6" stroke="#c04848" strokeWidth="5" />
        <path d="M735 414l45 5" stroke="#f39a9a" strokeWidth="2" />
        <path d="M729 379h6v37h-6z" fill="#3563ad" />
        <path d="M729 379h2v37h-2z" fill="#5a86cc" />
        <path d="M730 378h3v4h-3z" fill="#cfe6ff" />
        <g fontSize="16" fontWeight="300">
          <text x="729" y="376" fill="#1768ff">Z</text>
          <text x="739" y="376" fontSize="14" fill="#1fb42a">Y</text>
          <text x="776" y="415" fill="#d32f2f">X</text>
        </g>
      </g>

      {/* crosshair cursor */}
      <g transform="translate(-8 -154)" fill="none">
        <path d="M1401.500 788v75" stroke="#6a62d8" />
        <path d="M1413 789l-16 74" stroke="#5fb068" />
        <path d="M1366 835l106 11" stroke="#d05a5a" />
        <rect x="1398.500" y="835.500" width="6" height="6" fill="#212830" stroke="#f2f2f2" />
      </g>
    </svg>
  )
}

function ViewCube() {
  return (
    <div className="absolute right-3 top-[60px] flex w-[142px] flex-col items-center">
      <svg width="142" height="133" viewBox="1415 214 142 133" className="overflow-visible" aria-label="ViewCube">
        <ellipse cx="1486" cy="285" rx="55" ry="41" fill="none" stroke="#424951" strokeWidth="13" />
        <ellipse cx="1484" cy="292" rx="28" ry="12" fill="#3a4149" fillOpacity=".6" />
        <path d="M1466 225 1513 229 1508 262 1457 257z" fill="#b4b5b8" />
        <path d="M1457 257 1508 262 1505 296 1459 290z" fill="url(#cube)" />
        <path d="M1513 229 1508 262 1505 296 1511 268z" fill="#a2a3a6" />
        <path d="M1467 251l32 4-1 12-32-3z" fill="#9aa4ab" />
        <path d="M1457 257 1508 262M1513 229l-5 33-3 34" stroke="#33383d" strokeDasharray="6 2" fill="none" />
        <g fontSize="22" textAnchor="middle" fill="#50565c">
          <text x="1488" y="250">上</text>
          <text x="1482" y="285">前</text>
        </g>
        <g fontSize="18" textAnchor="middle" fill="#a3a5a8">
          <text x="1430" y="279">西</text>
          <text x="1544" y="293">东</text>
          <text x="1475" y="336" fontSize="20">南</text>
        </g>
      </svg>
      <button className="flex h-[18px] w-[58px] items-center justify-center gap-1 rounded border border-[#6c7182] bg-[#8f94a3] text-[10px] text-[#5c606d]">
        未命名
        <svg width="9" height="5" viewBox="0 0 9 5" aria-hidden="true"><path d="M.5.500h8L4.500 4.500z" fill="none" stroke="#c3c7d2" /></svg>
      </button>
    </div>
  )
}

function NavBar() {
  return (
    <svg className="absolute right-1 top-[236px]" width="32" height="212" viewBox="0 0 32 212" fill="none" aria-label="导航栏">
      <rect x=".5" y=".5" width="31" height="211" rx="3" fill="#575c5f" stroke="#686d70" />
      <g stroke="#40464b" strokeWidth="1.200">
        <circle cx="26" cy="5" r="3.500" fill="#43494d" /><circle cx="26" cy="206" r="3.500" fill="#43494d" />
        <path d="M16 20h11v11a11 10 0 1 1-11-11z" fill="#545a66" /><circle cx="16" cy="30" r="5.500" /><path d="m12 34-4 4M20 34l4 4" />
        <path d="M12 83l-7-8c-1-2 1-2 2-1l4 3-2-11c0-2 2-2 3 0l2 7V63c0-2 3-2 3 0v10l2-8c1-2 3-1 3 0l-1 10 3-5c1-1 3 0 2 1l-3 9-3 3z" fill="#545a66" />
        <path d="m5 90 15 15M20 90 5 105M5 94v-4h4M16 90h4v4M5 101v4h4" /><circle cx="20" cy="104" r="4.500" /><path d="m23 108 4 4" strokeWidth="3" />
        <ellipse cx="15" cy="141" rx="11" ry="4" /><path d="M15.500 128l4 4h-2v16h-4v-16h-2z" fill="#545a66" />
        <path d="M4.500 170.500h6v6h-6zM12.500 170.500h6v6h-6zM20.500 170.500h6v6h-6zM4.500 179.500h16v12h-16z" />
      </g>
      <path d="M14 49h5l-2.500 3zM14 119h5l-2.500 3zM14 157h5l-2.500 3zM9 181l7 4-7 4zM7 143l5-3v6z" fill="#383e43" />
      <path d="M3 56.500h26M3 164.500h26" stroke="#64696c" />
    </svg>
  )
}

function CommandLine() {
  return (
    <div className="absolute bottom-0 left-[636px] w-[289px]">
      <div className="mb-px ml-14 w-fit rounded-sm bg-[#55585a] px-1 text-xs leading-[15px] text-[#c9c9c9]">命令:</div>
      <div className="flex h-[27px] border border-[#707070]">
        <div className="flex w-[53px] items-center bg-linear-to-b from-[#6a6a6a] to-[#3a3a3a] pl-1">
          <svg width="5" height="17" viewBox="0 0 5 17" aria-hidden="true">
            <path d="M1 0v17M4 0v17" stroke="#a5a5a5" strokeWidth="1.500" strokeDasharray="2 1" />
          </svg>
          <button aria-label="关闭命令行" className="ml-[6px]">
            <svg width="9" height="9" viewBox="0 0 9 9" aria-hidden="true"><path d="M1 1l7 7M8 1 1 8" stroke="#d8d8d8" strokeWidth="1.700" /></svg>
          </button>
          <button aria-label="自定义" className="ml-[9px]">
            <Icon><path d="M3 1v4l2 1.500L8 5l-1-4c3 1 4 4 2.500 6L15 13.500 13.500 15 7 8.500C3 9 0 5 3 1z" fill="#ececec" stroke="#333" strokeWidth=".5" /></Icon>
          </button>
        </div>
        <label className="flex flex-1 items-center bg-[#bcbdbf] pl-1">
          <svg width="16" height="14" viewBox="0 0 16 14" fill="none" aria-hidden="true">
            <rect x=".5" y=".5" width="15" height="13" rx="1" fill="#a4b1c2" stroke="#5b6472" />
            <path d="m3 4 4 3-4 3M8 10.500h5" stroke="#2b3442" strokeWidth="1.200" />
          </svg>
          <svg width="6" height="4" viewBox="0 0 6 4" className="ml-1" aria-hidden="true"><path d="M0 0h6L3 4z" fill="#666" /></svg>
          <input aria-label="命令" placeholder="键入命令" className="ml-2 min-w-0 flex-1 bg-transparent text-xs italic text-black placeholder:text-[#7c7c7c]" />
          <svg width="7" height="4" viewBox="0 0 7 4" className="mr-1" aria-hidden="true"><path d="M0 4h7L3.500 0z" fill="#222" /></svg>
        </label>
      </div>
    </div>
  )
}

function Viewport() {
  return (
    <main className="relative min-w-0 flex-1 overflow-hidden bg-[#212830]">
      <Model />
      <div className="absolute left-1 top-[6px] text-xs leading-4 text-[#d6d6d6]">[−][自定义视图][真实]</div>
      <div className="absolute right-[10px] top-[9px] flex items-center gap-2 text-white">
        <button aria-label="最小化图形" className="flex size-3 items-end pb-[2px]"><span className="h-[3px] w-[10px] bg-[#e8e8e8]" /></button>
        <button aria-label="还原图形">
          <Icon size={12}><path d="M3.500 1.500h7v7M1.500 4h6v6.500h-6z" stroke="#e8e8e8" strokeWidth="2" /></Icon>
        </button>
        <button aria-label="关闭图形">
          <Icon size={12}><path d="M2 2l7 8M9 2l-7 8" stroke="#e8e8e8" strokeWidth="2.400" /></Icon>
        </button>
      </div>
      <ViewCube />
      <NavBar />
      <CommandLine />
    </main>
  )
}

/* ---------- properties palette ---------- */

type Row = { name: string; value: string; dim?: boolean; mark?: 'swatch' | 'line' | 'weight' }

const SECTIONS: { title: string; rows: Row[] }[] = [
  {
    title: '常规',
    rows: [
      { name: '颜色', value: '147,149,152', mark: 'swatch' },
      { name: '图层', value: '0' },
      { name: '线型', value: 'ByLayer', mark: 'line' },
      { name: '线型比例', value: '1' },
      { name: '线宽', value: '2.11 mm', mark: 'weight' },
      { name: '透明度', value: 'ByLayer' },
      { name: '厚度', value: '0' },
    ],
  },
  {
    title: '三维效果',
    rows: [
      { name: '材质', value: 'ByLayer' },
      { name: '阴影显示', value: '投射和接收阴影' },
    ],
  },
  {
    title: '打印样式',
    rows: [
      { name: '打印样式', value: 'ByColor', dim: true },
      { name: '打印样式表', value: '无' },
      { name: '打印表附着到', value: '模型', dim: true },
      { name: '打印表类型', value: '不可用', dim: true },
    ],
  },
  {
    title: '视图',
    rows: [
      { name: '圆心 X 坐标', value: '19.6034', dim: true },
      { name: '圆心 Y 坐标', value: '-46.1974', dim: true },
      { name: '圆心 Z 坐标', value: '0', dim: true },
      { name: '高度', value: '179.1548', dim: true },
      { name: '宽度', value: '168.6471', dim: true },
    ],
  },
  {
    title: '其他',
    rows: [
      { name: '注释比例', value: '1:1' },
      { name: '打开 UCS 图标', value: '是' },
      { name: '在原点显示 UCS 图标', value: '是' },
      { name: '每个视口都显示 UCS', value: '是' },
      { name: 'UCS 名称', value: '' },
      { name: '视觉样式', value: '真实' },
    ],
  },
]

function Palette() {
  return (
    <aside className="relative flex w-[339px] shrink-0 flex-col border-l-2 border-[#5c5c5c] bg-[#5c5c5c] text-xs">
      <h2 className="mt-[3px] flex h-[22px] items-center rounded-t bg-[#515151] pl-[7px] text-[#f0f0f0]">
        <span className="mr-1 h-[10px] w-1 border-x border-dotted border-[#333]" />
        特性
      </h2>
      <div className="mt-[11px] flex items-center pl-[5px]">
        <div className="flex h-[23px] w-[249px] items-center border border-[#2e2e2e] bg-linear-to-b from-[#7a7a7a] to-[#606060]">
          <select aria-label="选择对象" className="h-full flex-1 appearance-none bg-transparent pl-[3px] text-white">
            <option>无选择</option>
          </select>
          <span className="flex h-full w-[14px] items-center justify-center border-l border-[#333]"><Caret /></span>
        </div>
        <button aria-label="切换 PICKADD" className="ml-2">
          <Icon><path d="M1.500 2.500h8v8h-8z" fill="#8db6e6" stroke="#223" /><path d="M5.500 6.500h8v8h-8z" fill="#a9cbf2" stroke="#111" /><path d="M11.500 0v8M7.500 4h8" stroke="#18c218" strokeWidth="2.600" /></Icon>
        </button>
        <button aria-label="选择对象" className="ml-2">
          <Icon><path d="M8 1v5M8 10v5M1 8h5M10 8h5M5.500 5.500h5v5h-5z" stroke="#f0f0f0" strokeWidth="1.300" /></Icon>
        </button>
        <button aria-label="快速选择" className="ml-[9px]">
          <Icon><path d="M6 1v5M6 10v4M0 8h4M8 8h3M3.500 5.500h5v5h-5z" stroke="#f0f0f0" strokeWidth="1.300" /><path d="M12 0l-3 4h2l-1 4 5-5h-2l2-3z" fill="#ffb31a" /><path d="M9 8.500h6.500V16H9z" fill="#fff" stroke="#111" strokeWidth=".7" /><path d="M10.500 10.500h4M10.500 12.500h4M10.500 14.500h4" stroke="#222" strokeDasharray="1 .5" /></Icon>
        </button>
      </div>
      <div className="mt-1 flex flex-col gap-[3px] pl-[10px] pr-[18px]">
        {SECTIONS.map((section) => (
          <section key={section.title}>
            <h3 className="flex h-[22px] items-center justify-between border border-[#333333] bg-[#494949] pl-[6px] pr-2 font-bold text-white">
              {section.title}
              <span className="h-[2px] w-[6px] bg-white" />
            </h3>
            <table className="ml-[17px] table-fixed border-separate border-spacing-0">
              <tbody>
                {section.rows.map((row) => (
                  <tr key={row.name} className="h-[21px]">
                    <th className="w-[134px] border-x border-b border-[#505050] p-0 pl-[6px] text-left font-normal whitespace-nowrap text-[#f2f2f2]">{row.name}</th>
                    <td className={clsx('w-[158px] border-r border-b border-[#505050] p-0 pl-[2px]', row.dim ? 'text-[#a9a9a9]' : 'text-[#f5f5f5]')}>
                      <div className="flex h-5 items-center">
                        {row.mark === 'swatch' && <span className="ml-px mr-[6px] size-[10px] rounded-xs border border-black bg-[#939598]" />}
                        {row.mark === 'line' && <span className="ml-[3px] mr-[5px] h-px w-[62px] bg-white" />}
                        {row.mark === 'weight' && <span className="mr-[5px] h-[18px] w-[65px] bg-white" />}
                        {row.value}
                      </div>
                    </td>
                  </tr>
                ))}
              </tbody>
            </table>
          </section>
        ))}
      </div>
      <div className="mx-[2px] mb-[2px] mt-auto h-px rounded-b bg-[#4d4d4d]" />
      <div className="absolute bottom-0 right-8 w-[194px] pb-[2px] text-[#5c5c5c]">
        <div className="text-[37px] leading-[34px] font-bold whitespace-nowrap [-webkit-text-stroke:1px_#6e6e6e] [font-family:'Liberation_Sans_Narrow','Roboto_Condensed','DejaVu_Sans_Condensed',sans-serif]">
          MOXING<span className="text-[#464646]">.NET</span>
        </div>
        <div className="text-2xl leading-[22px] [-webkit-text-stroke:1px_#6e6e6e] [font-family:'Liberation_Sans','Noto_Sans_CJK_SC',sans-serif]">模型网</div>
      </div>
    </aside>
  )
}

/* ---------- layout tabs and status bar ---------- */

function LayoutTabs() {
  return (
    <div className="flex h-[18px] items-stretch pl-[13px] text-xs leading-[18px]">
      {['模型', '布局1', '布局2'].map((name, i) => (
        <button
          key={name}
          className={clsx(
            'mr-[2px] rounded-b-lg px-[10px]',
            i === 0 ? 'bg-linear-to-b from-[#606060] to-[#8a8a8a] font-bold text-white' : 'border border-t-0 border-[#565656] bg-[#4a4a4a] text-[#b5b5b5]',
          )}
        >
          {name}
        </button>
      ))}
      <button aria-label="新建布局" className="ml-[2px] flex w-[22px] items-center justify-center rounded-b-lg border border-t-0 border-[#565656] bg-[#454545]">
        <svg width="7" height="7" viewBox="0 0 7 7" aria-hidden="true"><path d="M3.500 0v7M0 3.500h7" stroke="#bdbdbd" strokeWidth="1.500" /></svg>
      </button>
    </div>
  )
}

function Group({ children, className }: { children: ReactNode; className?: string }) {
  return <div className={clsx('flex h-[26px] shrink-0 items-stretch divide-x divide-[#6f6f6f] border border-[#757575] bg-[#525252]', className)}>{children}</div>
}

function Cell({ children, className }: { children: ReactNode; className?: string }) {
  return <div className={clsx('flex items-center', className)}>{children}</div>
}

function Tool({ name, children, drop, on }: { name: string; children: ReactNode; drop?: boolean; on?: boolean }) {
  return (
    <button aria-label={name} className="flex h-full items-center">
      <span className="flex w-6 justify-center"><Icon className={on ? 'drop-shadow-[0_0_2px_#0a5fd0]' : undefined}>{children}</Icon></span>
      {drop && <span className="flex w-[15px] justify-center"><Caret big /></span>}
    </button>
  )
}

const ON = '#2a8cf0'
const OFF = '#c2c2c2'

function StatusBar() {
  return (
    <footer className="flex h-[30px] shrink-0 items-start justify-between border-t border-[#565656] bg-[#393939]">
      <LayoutTabs />
      <div className="flex items-center gap-px pr-px pt-px text-xs text-white">
        <Group className="w-[184px]">
          <button className="w-full pr-1 text-right whitespace-nowrap">160.4476, -102.6768, 0.0000</button>
        </Group>
        <Group><button className="w-7 font-bold">模型</button></Group>
        <Group>
          <Cell>
            <Tool name="捕捉"><path d="M3.500 1v14M6.500 1v14M9.500 1v14M12.500 1v14" stroke={OFF} /><path d="M1 4.500h14M1 8.500h14M1 12.500h14" stroke={OFF} strokeDasharray="1 1" /></Tool>
            <Tool name="栅格" drop><path d="M1 2.500h14M1 5.500h14M1 8.500h14M1 11.500h14M1 14.500h14" stroke={OFF} strokeDasharray="1 2" /></Tool>
          </Cell>
        </Group>
        <Group>
          <Cell><Tool name="推断约束"><path d="M8.500 13V2.500h4V6H9" stroke={OFF} /><path d="M4 10h5v5H4z" fill={OFF} /></Tool></Cell>
          <Cell><Tool name="动态输入" on><path d="M1 5.500h8M5 1.500v8" stroke={ON} strokeWidth="1.500" /><rect x="6" y="10" width="10" height="4" rx="1" fill={ON} /></Tool></Cell>
          <Cell>
            <Tool name="正交" on><path d="M2.500 1v12.500H16M3 9h4v4" stroke={ON} strokeWidth="1.500" /></Tool>
            <Tool name="极轴追踪" drop><circle cx="7.500" cy="8" r="6.500" stroke={OFF} strokeWidth="1.500" /><path d="M7.500 8h8M7.500 8l4-4M12 5.500 15 8l-3 2.500" stroke={OFF} /></Tool>
            <Tool name="等轴测草图" drop><path d="M8 1v15" stroke={OFF} /><path d="M0 1l15 14" stroke={OFF} strokeWidth="1.300" /></Tool>
          </Cell>
          <Cell>
            <Tool name="对象捕捉追踪"><path d="M15 14.500H1L13 2" stroke={OFF} strokeWidth="1.300" /><path d="M5 7h4v4H5z" fill={OFF} /></Tool>
            <Tool name="对象捕捉" drop on><path d="M3.500 3.500h12v12h-12z" stroke={ON} strokeWidth="1.600" /><path d="M1 1h5v5H1z" fill="#12c312" stroke="#052" /></Tool>
          </Cell>
          <Cell><Tool name="线宽" drop><path d="M0 2.500h16M0 6.500h12" stroke={OFF} strokeWidth="2" /><path d="M0 10h16M0 14h10" stroke={OFF} strokeWidth="2.500" /></Tool></Cell>
          <Cell>
            <Tool name="透明度" on><path d="M1.500 1.500h13v13h-13z" stroke={ON} strokeWidth="1.500" fill="#1b5ba5" /><path d="M2 4h12M2 8h12M2 12h12" stroke={ON} strokeWidth="2" strokeDasharray="2 2" /><path d="M4 6h10M4 10h10" stroke={ON} strokeWidth="2" strokeDasharray="2 2" /></Tool>
          </Cell>
          <Cell><Tool name="选择循环"><path d="M0 3.500h6M3 .5v6" stroke={OFF} /><path d="M4.500 13V5.500H12" stroke={OFF} /><path d="M7 7h9v9H7z" fill="#97bd7a" /></Tool></Cell>
          <Cell>
            <Tool name="三维对象捕捉" drop><path d="M4 4.500 9 2l6 2.500v7L9 15l-6-3.500V7M3.500 5l6 3 5.500-3M9.500 8v7" stroke={OFF} strokeWidth="1.300" /><path d="M.5 1.500h4v4h-4z" fill="#12c312" stroke="#052" /></Tool>
          </Cell>
        </Group>
        <Group>
          <Cell>
            <Tool name="动态 UCS" on><path d="M2.500 3v10.500H15M1 5l1.500-3L4 5M12.500 12l3 1.500-3 1.500M3 13l6-6" stroke={ON} strokeWidth="1.300" /><path d="M14 1 7 7h4l-3 5 8-7h-4z" fill={ON} /></Tool>
            <Tool name="选择过滤" drop><path d="M8 1 2 4v7.500L8 15l6-3.500V4zM2 4l6 3.500L14 4M8 7.500V15" stroke={OFF} strokeWidth="1.200" /></Tool>
            <Tool name="小控件" drop><path d="M8 1.500 2 5v7l6 3 6-3V5z" stroke={OFF} /><path d="M8 8V2" stroke={ON} strokeWidth="1.500" /><path d="M2 12l5-3.500" stroke="#26b526" /><path d="m9 9 5 3" stroke="#e22" /><circle cx="8" cy="2" r="1.500" fill={ON} /><path d="M.5 11h3v3h-3z" fill="#26b526" /><path d="M12.500 11h3v3h-3z" fill="#e33" /><circle cx="8" cy="8.500" r="1.700" stroke={OFF} /></Tool>
          </Cell>
        </Group>
        <Group>
          <Cell>
            <Tool name="注释可见性" on><path d="M7.500 0h1L10 9l5.500 5v2L10 13.500H6L.5 16v-2L6 9z" fill={ON} /><circle cx="11.500" cy="4.500" r="3" stroke={ON} fill="#525252" strokeWidth="1.500" /></Tool>
            <Tool name="自动缩放"><path d="M7.500 0h1L10 9l5.500 5v2L10 13.500H6L.5 16v-2L6 9z" fill={OFF} /><path d="m9 8 5-7-1 4h3l-5 5" fill={OFF} stroke="#525252" strokeWidth=".7" /></Tool>
            <Tool name="注释"><path d="M7.500 0h1L10 9l5.500 5v2L10 13.500H6L.5 16v-2L6 9z" fill={OFF} /></Tool>
            <button className="flex items-center gap-1 pl-1 pr-[5px] whitespace-nowrap">1:1 / 100% <Caret big /></button>
          </Cell>
        </Group>
        <Group>
          <Cell>
            <Tool name="切换工作空间" drop><circle cx="8" cy="8" r="4" stroke={OFF} strokeWidth="3" /><path d="M8 1.500v2M8 12.500v2M1.500 8h2M12.500 8h2M3.400 3.400l1.400 1.400M11.200 11.200l1.400 1.400M12.600 3.400l-1.400 1.400M4.800 11.200l-1.400 1.400" stroke={OFF} strokeWidth="2.500" /></Tool>
          </Cell>
          <Cell><Tool name="注释监视器"><path d="M8 1v14M1 8h14" stroke={OFF} strokeWidth="1.600" /></Tool></Cell>
        </Group>
        <Group>
          <Cell>
            <Tool name="单位"><path d="M6 1h5v14H6z" fill={OFF} /><path d="M8 3.500h3M9 5.500h2M8 8h3M9 10.500h2M8 13h3" stroke="#525252" /></Tool>
            <label className="flex w-[73px] items-center">
              <select aria-label="图形单位" className="ml-1 flex-1 appearance-none bg-transparent font-bold">
                <option>小数</option>
              </select>
              <Caret big className="mr-[5px]" />
            </label>
          </Cell>
          <Cell><Tool name="快捷特性"><path d="M4.500 3.500h8v10h-8z" stroke={OFF} /><path d="M6 6.500h5M6 8.500h5M6 10.500h5" stroke={OFF} strokeDasharray="1.500 .8" /></Tool></Cell>
        </Group>
        <Group>
          <Cell><Tool name="硬件加速" on><circle cx="8" cy="8" r="7.500" fill="#0d579e" stroke={ON} strokeWidth="1.400" /><path d="M7 10l5-4" stroke={ON} strokeWidth="1.500" /></Tool></Cell>
        </Group>
        <Group>
          <Cell>
            <Tool name="受信任的 DWG"><path d="M1 1h9l4 4v5H1z" fill="#35618f" /><path d="M1 10h9v5H1z" fill="#f1d33c" /><path d="M3 2.500h3v3M4 7l6 1" stroke="#fff" strokeWidth="1.400" /><path d="M8 12l2.500 3L16 9" stroke="#19b019" strokeWidth="2" /></Tool>
            <Tool name="隔离对象"><path d="M1.500 1.500h6v6h-6z" stroke={OFF} /><circle cx="12.500" cy="6.500" r="3" stroke={OFF} /><path d="M7.500 9.500 11 15H4z" stroke={OFF} /></Tool>
          </Cell>
        </Group>
        <Group>
          <Cell>
            <Tool name="全屏显示"><path d="M.5 2.500h15v11H.5z" stroke={OFF} /><path d="M13 5v3.500L9.500 5zM3 11V7.500L6.500 11z" fill={OFF} /><path d="m9 7 3-2M4 11l3-3" stroke={OFF} /></Tool>
            <Tool name="自定义"><path d="M0 3h16M0 8h16M0 13h16" stroke={OFF} strokeWidth="2" /></Tool>
          </Cell>
        </Group>
      </div>
    </footer>
  )
}

/* ---------- window ---------- */

function AppButton() {
  return (
    <button aria-label="应用程序菜单" className="absolute left-2 top-[7px] flex h-[41px] w-[41px] items-center justify-between border border-black bg-linear-to-b from-[#c4c4c4] via-[#8a8a8a] to-[#6a6a6a] pl-1 pr-px">
      <svg width="24" height="28" viewBox="0 0 24 28" aria-hidden="true">
        <path d="M11 1 .5 24 7 27l1-5h7l2 5 6-3L14 1z" fill="#c62127" />
        <path d="M11 1 .5 24 7 27l4-12z" fill="#9c161b" />
        <path d="m12 9-3 9 11-1z" fill="#e2575b" />
        <path d="M5 15c5 4 10 5 16 4l2 5-6 3-2-5H8z" fill="#8d1317" fillOpacity=".55" />
      </svg>
      <svg width="7" height="4" viewBox="0 0 7 4" aria-hidden="true"><path d="M0 0h7L3.500 4z" fill="#222" /></svg>
    </button>
  )
}

export default function App() {
  return (
    <div className="relative flex h-screen flex-col overflow-hidden rounded-t-lg border-t border-[#4a5058] bg-linear-to-r from-[#c5dcf0] via-[#b4cbe0] to-[#c8dcec] [font-family:'Noto_Sans','Noto_Sans_CJK_SC',sans-serif]">
      <svg width="0" height="0" className="absolute" aria-hidden="true">
        <defs>
          <linearGradient id="disc" x1="0" y1="0" x2="0" y2="1">
            <stop offset="0" stopColor="#d3d7de" />
            <stop offset="1" stopColor="#f8f9fb" />
          </linearGradient>
          <linearGradient id="cube" x1="0" y1="0" x2="0" y2="1">
            <stop offset="0" stopColor="#b4b5b8" />
            <stop offset="1" stopColor="#8f9092" />
          </linearGradient>
        </defs>
      </svg>
      <div className="absolute inset-x-0 top-0 h-8 bg-[linear-gradient(100deg,#e4eef7_0%,#c3dcf2_12%,#cde8fb_29%,#a9c3dd_31%,#b0c2d6_41%,#c8def2_52%,#d7ebfb_57%,#a9b9ca_60%,#b4c3d2_63%,#d8ebf9_66%,#9eadba_68%,#c9dff0_69%,#bdd9ef_90%,#dbe7f1_100%)]" />
      <div className="absolute inset-x-0 bottom-0 top-8 bg-[#e3ebf3]" />
      <TitleBar />
      <div className="relative mx-2 mb-2 flex min-h-0 flex-1 flex-col bg-[#535353]">
        <TabRow />
        <Ribbon />
        <div className="h-[3px] shrink-0 border-b border-t border-b-[#5c5c5c] border-t-[#262626] bg-[#8a8a8a]" />
        <div className="flex min-h-0 flex-1">
          <Viewport />
          <Palette />
        </div>
        <StatusBar />
      </div>
      <AppButton />
    </div>
  )
}
